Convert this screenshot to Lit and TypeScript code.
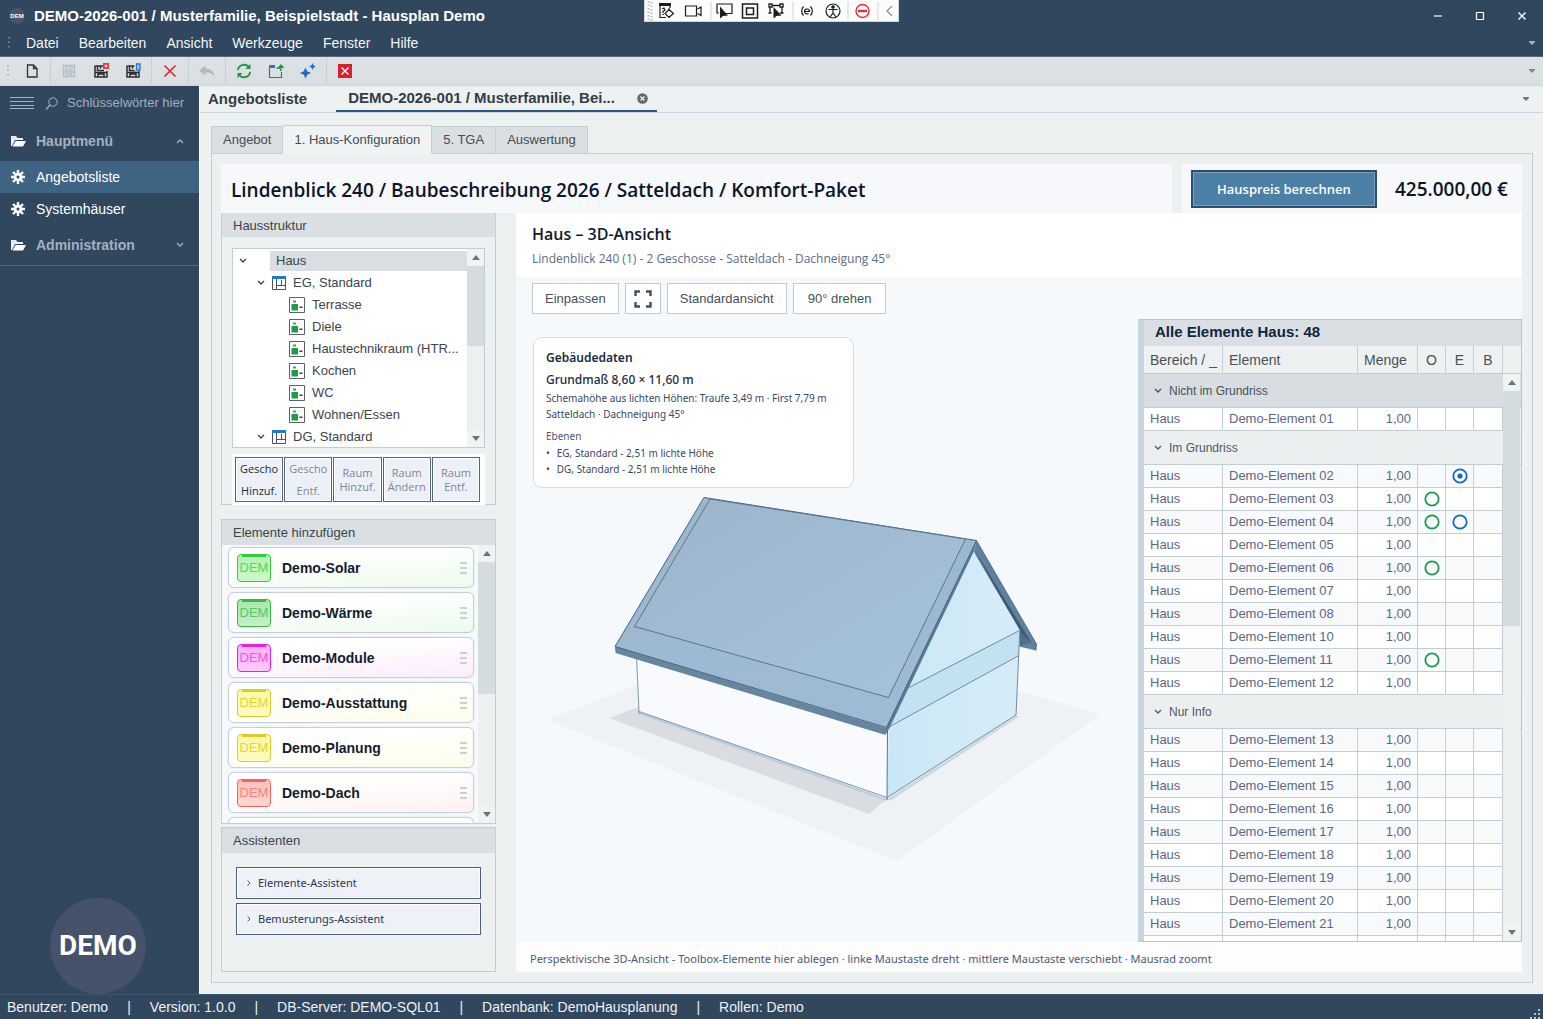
import { LitElement, html, svg, css, nothing } from "lit";
import { customElement, state } from "lit/decorators.js";
import { classMap } from "lit/directives/class-map.js";

type Mark = "ring" | "dot" | "";
interface Row { no: string; o?: Mark; e?: Mark; }
interface Group { title: string; rows: Row[]; }

const GROUPS: Group[] = [
  { title: "Nicht im Grundriss", rows: [{ no: "01" }] },
  {
    title: "Im Grundriss",
    rows: [
      { no: "02", e: "dot" }, { no: "03", o: "ring" }, { no: "04", o: "ring", e: "ring" },
      { no: "05" }, { no: "06", o: "ring" }, { no: "07" }, { no: "08" }, { no: "10" },
      { no: "11", o: "ring" }, { no: "12" },
    ],
  },
  {
    title: "Nur Info",
    rows: ["13", "14", "15", "16", "17", "18", "19", "20", "21", "22"].map((no) => ({ no })),
  },
];

const TOOLBOX = [
  { name: "Demo-Solar", tone: "lime" },
  { name: "Demo-Wärme", tone: "green" },
  { name: "Demo-Module", tone: "pink" },
  { name: "Demo-Ausstattung", tone: "yellow" },
  { name: "Demo-Planung", tone: "yellow" },
  { name: "Demo-Dach", tone: "red" },
];

const ROOMS = ["Terrasse", "Diele", "Haustechnikraum (HTR...", "Kochen", "WC", "Wohnen/Essen"];

const icon = (w: number, h: number, body: unknown) =>
  html`<svg class="icon" width=${w} height=${h} viewBox="0 0 ${w} ${h}" fill="none" aria-hidden="true">${body}</svg>`;

const chevronDown = icon(8, 6, svg`<path d="M1 1l3 3 3-3" stroke="currentColor" stroke-width="1.3"/>`);
const chevronUp = icon(8, 6, svg`<path d="M1 5l3-3 3 3" stroke="currentColor" stroke-width="1.3"/>`);
const caret = icon(6, 4, svg`<path d="M0 0h6v1L3 4 0 1z" fill="currentColor"/>`);
const gear = icon(14, 14, svg`<g stroke="#fff" stroke-width="2.4"><path d="M7 0v14M0 7h14M2 2l10 10M12 2L2 12"/></g>
  <circle cx="7" cy="7" r="4.4" fill="#fff"/><circle cx="7" cy="7" r="1.5" fill="#30475e"/>`);
const folder = icon(15, 12, svg`<path d="M0 11V1h5l1.500 2H12v2H4L1 11z" fill="#e8ecef"/><path d="M4.500 6H15l-3 5.500H1.500z" fill="#fff"/>`);

const saveShape = (c: string) => svg`<path d="M2 3h9.500M2 2.500V14h12V8M4.500 3v4.500H11M7.500 3v2.500M2 9.500h12M5 14v-3h6v3" stroke=${c} stroke-width="1.5"/>`;
const iconNew = icon(16, 16, svg`<path d="M3.500 2h6L13 5.500V14H3.500z M9.500 2v3.500H13" stroke="#2f3336" stroke-width="1.3"/>`);
const iconSave = icon(16, 16, svg`<path d="M2.500 2.500h11v11h-11z M5 2.500v4.500h6V2.500M8.500 3v2.500M2.500 9h11M5.500 13.500v-2.500h5v2.500" stroke="#b3bec9" stroke-width="1.4"/>`);
const iconSaveRed = icon(16, 16, svg`${saveShape("#2c2f31")}<path d="M10 0h6v6h-6z" fill="#e23b42"/><path d="M13 1.500v3M11.500 3h3" stroke="#fff"/>`);
const iconSaveBlue = icon(16, 16, svg`${saveShape("#2c2f31")}<path d="M9.500 0H16v8h-6.500z" fill="#dde2e5"/><path d="M11.500 1H15v6h-3.500z" fill="#a9cdf0" stroke="#2b76c8" stroke-width="1.3"/>`);
const iconDelete = icon(16, 16, svg`<path d="M2.500 2.500l11 11M13.500 2.500l-11 11" stroke="#df2b2f" stroke-width="1.7"/>`);
const iconUndo = icon(16, 16, svg`<path d="M0 7.500L6.500 2.500v3C12 5.500 15 8.500 15.500 13.500 13 10 10.500 9.500 6.500 9.500v3z" fill="#b0b9c2"/>`);
const iconRefresh = icon(16, 16, svg`<path d="M1.800 7A6.300 6.300 0 0 1 13.500 5M14.200 9A6.300 6.300 0 0 1 2.500 11" stroke="#23944a" stroke-width="1.8"/>
  <path d="M14.500 1v5h-5zM1.500 15v-5h5z" fill="#23944a"/>`);
const iconOpen = icon(16, 16, svg`<path d="M1.500 4v10.500h12V9" stroke="#5c6872" stroke-width="1.2"/><path d="M1 2h6v3H1z" fill="#2b76c8"/>
  <path d="M8.500 5h3c1.500 0 1.500 1 1.500 3" stroke="#23944a" stroke-width="1.6"/><path d="M9.500 5L13 1l3.500 4z" fill="#23944a"/>`);
const iconSparkle = icon(16, 16, svg`<path d="M5.500 4.500l1.700 3.800L11 10l-3.800 1.700L5.500 15.500l-1.700-3.800L0 10l3.800-1.700z" fill="#1e6bc6"/>
  <path d="M12.500 0l1.100 2.400L16 3.500l-2.400 1.100L12.500 7l-1.100-2.400L9 3.500l2.400-1.100z" fill="#1e6bc6"/>`);
const iconClose = icon(16, 16, svg`<path d="M1 1h14v14H1z" fill="#dc1f2d"/><path d="M4.500 4.500l7 7M11.500 4.500l-7 7" stroke="#fff" stroke-width="1.4"/>`);

const floorIcon = icon(14, 14, svg`<path d="M.5 1.500h13v12H.5zM4.500 3v10.500M4.500 9.500h9M9.500 4v5.500" stroke="#4b5459"/><path d="M0 0h14v3H0z" fill="#1f78d1"/>`);
const roomIcon = icon(16, 16, svg`<path d="M.5.5h15v15H.5z" stroke="#5a6266" fill="#fff"/><path d="M2.500 7h6.500v6.500h-6.500z" fill="#1f9a48"/>
  <path d="M4 3.500h3v2H4z" fill="#5f8a6d"/><path d="M10.500 9.500h3v1.500h-3z" fill="#3a4145"/>`);
const fitIcon = icon(18, 18, svg`<path d="M1.500 6V1.500H6M12 1.500h4.500V6M16.500 12v4.500H12M6 16.500H1.500V12" stroke="#3c5069" stroke-width="2.4"/>`);

@customElement("app-root")
export class AppRoot extends LitElement {
  @state() private tab = "1. Haus-Konfiguration";
  @state() private section = "Angebotsliste";

  static styles = css`
    :host {
      display: flex; flex-direction: column; height: 100vh; overflow: hidden;
      font: 13px/16px "Liberation Sans", Arial, sans-serif; color: #3b444c; background: #edf1f2;
      --navy: #30475e; --line: #c1ced3; --bar: #dbe0e3; --soft: #ecf0f1;
    }
    * { box-sizing: border-box; }
    button { font: inherit; color: inherit; background: none; border: 0; padding: 0; margin: 0; }
    h1, h2, h3, p, ul { margin: 0; padding: 0; font-weight: inherit; font-size: inherit; }
    ul { list-style: none; }
    a { color: inherit; text-decoration: none; }
    .icon { display: block; flex: none; }
    .spacer { flex: 1; }
    .humanist { font-family: "Open Sans", "Noto Sans", sans-serif; }

    .titlebar { position: relative; display: flex; align-items: center; height: 32px; padding: 0 11px 0 9px; gap: 9px; background: var(--navy); color: #fff; flex: none; }
    .app-badge { display: grid; place-items: center; width: 16px; height: 16px; border-radius: 8px; background: #46536a; font-size: 6px; font-weight: bold; }
    .caption { font-size: 15px; font-weight: bold; }
    .win { display: flex; gap: 22px; }
    .win button { width: 20px; height: 20px; display: grid; place-items: center; }
    .recorder { position: absolute; left: 644px; top: 0; display: flex; align-items: center; width: 255px; height: 22px; padding: 0; background: #fbfcfd; border: 1px solid #cfd5da; border-top: 0; }

    .menubar { display: flex; align-items: center; height: 25px; padding: 0 8px 2px; gap: 20px; background: var(--navy); color: #f3f6f8; font-size: 14px; border-bottom: 1px solid #54687b; flex: none; }
    .menubar .icon { color: #a6b2bd; }
    .grip { margin-right: -4px; }
    .toolbar { display: flex; align-items: center; height: 29px; padding: 0 8px 0 7px; background: linear-gradient(#dee2e5, #d8dee1); border-bottom: 1px solid #cbd3d7; flex: none; }
    .toolbar button { width: 32px; height: 24px; display: grid; place-items: center; }
    .toolbar .first { margin-left: 11px; }
    .toolbar .icon { color: #7d868d; }
    .sep { width: 1px; height: 26px; margin: 0 2px; background: #c6cfd4; }

    .body { display: flex; flex: 1; min-height: 0; }
    .sidebar { display: flex; flex-direction: column; width: 199px; flex: none; background: var(--navy); color: #fff; font-size: 14px; }
    .search { display: flex; align-items: center; height: 34px; padding-left: 10px; gap: 11px; }
    .search input { width: 130px; margin-left: -2px; border: 0; padding: 0; outline: 0; background: none; color: #b4bec8; font: 13px/16px "Liberation Sans", Arial, sans-serif; }
    .search input::placeholder { color: #a3afbb; opacity: 1; }
    .group { display: flex; align-items: center; width: 100%; height: 41px; padding: 0 15px 0 11px; gap: 10px; color: #a5b1bd; font-weight: bold; text-align: left; }
    .group.last { border-bottom: 1px solid #54677a; }
    .nav-item { display: flex; align-items: center; height: 32px; padding: 0 11px; gap: 11px; }
    .nav-item.on { background: #3f6383; }
    .logo { display: grid; place-items: center; width: 96px; height: 96px; margin: 0 0 0 50px; border-radius: 48px; background: #46526a; font: bold 28px/36px Roboto, "Liberation Sans", sans-serif; }

    .work { display: flex; flex-direction: column; flex: 1; min-width: 0; border-left: 1px solid #f8fafb; }
    .docs { display: flex; align-items: stretch; height: 27px; padding: 0 14px 0 0; border-bottom: 1px solid #c9d5da; background: #edf1f2; font-size: 15px; font-weight: bold; color: #333d46; flex: none; }
    .docs button { display: flex; align-items: center; padding: 0 8px; }
    .docs .doc { margin-left: 21px; padding: 0 9px 0 12px; gap: 22px; border-bottom: 2px solid #2f5678; }
    .docs .more { padding: 0; color: #6e777e; }
    .content { display: flex; flex-direction: column; flex: 1; min-height: 0; padding: 12px 10px 11px 11px; }
    .tabs { display: flex; align-items: flex-end; flex: none; height: 29px; position: relative; z-index: 1; margin-bottom: -1px; }
    .tabs button { height: 28px; padding: 0 11px; border: 1px solid var(--line); border-left-width: 0; background: #dadfe2; color: #444d54; }
    .tabs button:first-child { border-left-width: 1px; }
    .tabs button.on { height: 29px; background: #eff3f4; border-bottom-color: #eff3f4; }
    .page { display: flex; flex-direction: column; flex: 1; min-height: 0; padding: 10px 10px 10px 9px; border: 1px solid var(--line); background: var(--soft); }

    .headline { display: flex; gap: 10px; height: 49px; flex: none; }
    .headline h1 { flex: 1; min-width: 0; padding: 0 10px; background: #f6f8fb; color: #0d1528; font-size: 19px; font-weight: 600; line-height: 52px; white-space: nowrap; }
    .price { display: flex; align-items: center; gap: 18px; padding: 0 14px 0 9px; background: #f6f8fb; color: #0d1528; font-size: 19px; font-weight: 600; }
    .price button { width: 186px; height: 38px; border: 2px solid #29506f; outline: 1px solid #7ba0bd; outline-offset: -3px; background: #4d80a6; color: #fff; font-size: 13px; font-weight: 600; }

    .columns { display: flex; flex: 1; min-height: 0; gap: 20px; }
    .left { display: flex; flex-direction: column; width: 275px; flex: none; }
    .panel { display: flex; flex-direction: column; border: 1px solid var(--line); background: var(--soft); }
    .panel h2 { height: 25px; padding: 0 11px; line-height: 25px; background: #d9dfe2; flex: none; }
    .structure { border-top: 0; margin-bottom: 14px; }
    .structure h2 { height: 24px; }
    .tree { display: flex; height: 200px; margin: 11px 10px 6px; border: 1px solid var(--line); background: #fff; }
    .nodes { flex: 1; min-width: 0; overflow: hidden; padding-top: 1px; }
    .nodes li { display: flex; align-items: center; height: 22px; white-space: nowrap; padding-left: 56px; gap: 7px; }
    .nodes .root { padding-left: 6px; gap: 23px; }
    .nodes .root span { flex: 1; padding-left: 6px; line-height: 20px; background: #d8dee1; }
    .nodes .floor { padding-left: 24px; }
    .ops { display: flex; gap: 1px; margin: 0 10px -1px; padding: 3px 5px 3px 3px; background: #fbfcfd; height: 51px; }
    .ops button { flex: 1; border: 1px solid #52677f; outline: 1px solid #fff; outline-offset: -2px; background: #edf1f7; color: #7a889a; font-size: 11px; line-height: 14px; }
    .ops .tall { line-height: 22px; }
    .ops .ready { color: #1c2a42; }

    .scroll { display: flex; flex-direction: column; width: 17px; flex: none; background: var(--soft); color: #6c7378; }
    .scroll .end { display: grid; place-items: center; height: 17px; flex: none; background: #f0f3f4; }
    .track { flex: 1; }
    .thumb { background: #d5dce0; }

    .toolbox { flex: 1; min-height: 0; margin-bottom: 3px; }
    .shelf { display: flex; flex: 1; min-height: 0; background: #f6f8fb; }
    .cards { flex: 1; overflow: hidden; padding: 2px 4px 0 6px; }
    .card { display: flex; align-items: center; height: 41px; margin-bottom: 4px; padding: 0 6px 0 8px; gap: 11px; border: 1px solid #c3cfe0; border-radius: 6px; background: #fff; color: #131c30; font-size: 14px; font-weight: bold; box-shadow: 0 0 1px #c3cfe0; }
    .chip { position: relative; display: grid; place-items: center; width: 34px; height: 28px; border: 1px solid; border-radius: 4px; font-size: 13px; font-weight: normal; }
    .chip::before { content: ""; position: absolute; left: 4px; right: 4px; top: -1px; border-top: 3px solid; border-color: inherit; }
    .lime { background: linear-gradient(175deg, #fff 30%, #ecfbec); }
    .lime .chip { color: #55d755; background: linear-gradient(#b0f3b0, #cdf8cd); border-color: #35cc3b; }
    .green { background: linear-gradient(175deg, #fff 30%, #ecfaed); }
    .green .chip { color: #58c864; background: linear-gradient(#a6e6ab, #c6f0c8); border-color: #35b845; }
    .pink { background: linear-gradient(175deg, #fff 30%, #fcebfc); }
    .pink .chip { color: #ee55e6; background: linear-gradient(#ffadfa, #ffc9fc); border-color: #ea1fe0; }
    .yellow { background: linear-gradient(175deg, #fff 30%, #fefee9); }
    .yellow .chip { color: #e0d531; background: linear-gradient(#fbf8a4, #fdfbc4); border-color: #dccb2b; }
    .red { background: linear-gradient(175deg, #fff 30%, #fef1f0); }
    .red .chip { color: #f2837d; background: linear-gradient(#ffc0bb, #ffd7d4); border-color: #ec6660; }

    .helpers { height: 145px; flex: none; }
    .helpers div { display: flex; flex-direction: column; gap: 4px; padding: 14px 14px; }
    .helpers button { display: flex; align-items: center; gap: 7px; height: 32px; padding-left: 10px; border: 1px solid #4a607b; outline: 1px solid #fff; outline-offset: -2px; background: #eef2f8; color: #2a3850; font-family: "Noto Sans", sans-serif; font-size: 11px; }

    .viewer { display: flex; flex-direction: column; flex: 1; min-width: 0; }
    .viewer header { height: 64px; padding: 10px 16px; background: #fff; flex: none; }
    .viewer h2 { color: #111a2d; font-size: 16px; font-weight: 600; line-height: 22px; }
    .viewer header p { color: #5c6b85; font-size: 12px; line-height: 16px; margin-top: 6px; }
    .viewer footer { height: 30px; padding: 0 14px; line-height: 33px; background: #fdfdfe; color: #4a5a76; font-family: "Noto Sans", sans-serif; font-size: 11px; flex: none; white-space: nowrap; }
    .canvas { position: relative; display: flex; justify-content: space-between; flex: 1; min-height: 0; background: #f6f9fc; }
    .house { position: absolute; inset: 0; width: 100%; height: 100%; }
    .overlay { position: relative; padding: 6px 16px; }
    .tools { display: flex; gap: 6px; margin-bottom: 23px; }
    .tools button { height: 31px; padding: 0 12px; border: 1px solid #bdcbd2; background: #fff; font-size: 13px; color: #46505a; }
    .tools .square { padding: 0 8px; }
    .tools .wide { padding: 0 14px; }
    .facts { width: 321px; height: 151px; margin-left: 1px; padding: 9px 12px; border: 1px solid #d3deeb; border-radius: 9px; background: #fff; color: #38475f; font-family: "Noto Sans", sans-serif; font-size: 10px; line-height: 16px; white-space: nowrap; }
    .facts h3 { color: #1c2942; font-size: 12px; line-height: 22px; font-weight: 600; }
    .facts .size { color: #1c2942; font-size: 12px; line-height: 21px; font-weight: 500; }
    .facts .levels { margin-top: 7px; line-height: 14px; color: #4b5971; }
    .facts li { display: flex; gap: 7px; }
    .facts ul { padding-top: 2px; }

    .elements { position: relative; display: flex; flex-direction: column; width: 384px; margin-top: 42px; border: 1px solid #b5c5cf; border-left: 6px solid #c8d4e0; background: var(--soft); overflow: hidden; flex: none; }
    .elements h3 { height: 26px; padding-left: 11px; line-height: 24px; background: #d9dfe2; color: #11253d; font-size: 15px; font-weight: bold; flex: none; }
    .grid { position: relative; flex: 1; min-height: 0; overflow: hidden; }
    table { width: 100%; table-layout: fixed; border-collapse: separate; border-spacing: 0; color: #5c6883; }
    th { height: 28px; padding: 0 6px; border-right: 1px solid var(--line); border-bottom: 1px solid var(--line); background: #edf1f2; color: #48515a; font-size: 14px; font-weight: normal; text-align: left; white-space: nowrap; overflow: hidden; }
    th.mark, td.mark { padding: 0; text-align: center; }
    th:last-child { border-right: 0; }
    td { height: 23px; padding: 0 6px; border-right: 1px solid var(--line); border-bottom: 1px solid var(--line); background: #fff; white-space: nowrap; }
    .odd td { background: #f7f9fb; }
    .amount { text-align: right; }
    td:last-child { border-right: 0; background: var(--soft); border-bottom: 0; }
    .mark .icon { margin: 0 auto; }
    .grp td, .grp td:last-child { height: 34px; padding: 0 10px; background: #ebeff0; border-bottom: 1px solid var(--line); font-size: 12px; color: #4d5967; }
    .grp.sel td { background: #d7dde0; color: #48515a; }
    .grp button { display: flex; align-items: center; gap: 7px; }
    .grid .scroll { position: absolute; right: 1px; top: 28px; bottom: 0; }

    .status { display: flex; align-items: center; height: 25px; padding: 0 1px 0 7px; gap: 19px; background: var(--navy); color: #edf1f5; font-size: 14px; flex: none; border-top: 1px solid #3e546a; white-space: nowrap; }
    .status .icon { align-self: flex-end; }
  `;

  private scroll(share: number) {
    return html`<div class="scroll" aria-hidden="true">
      <span class="end">${icon(8, 5, svg`<path d="M0 5l4-5 4 5z" fill="currentColor"/>`)}</span>
      <div class="track"><div class="thumb" style="height:${share}%"></div></div>
      <span class="end">${icon(8, 5, svg`<path d="M0 0l4 5 4-5z" fill="currentColor"/>`)}</span>
    </div>`;
  }

  private titlebar() {
    return html`<div class="titlebar">
      <span class="app-badge">DEM</span><span class="caption">DEMO-2026-001 / Musterfamilie, Beispielstadt - Hausplan Demo</span>
      <span class="spacer"></span>
      <div class="recorder">
        <svg class="icon" width="254" height="21" viewBox="645 0 254 21" fill="none" stroke="#1d1d1f" stroke-width="1.2" aria-hidden="true">
          <path d="M648.500 1v19M651.500 2v19" stroke="#b4babf" stroke-width="2" stroke-dasharray="1.500 2"/>
          <path d="M659 4.500h12" stroke-width="3"/><path d="M660 5v12.500h6M662 9l2-1 1 2-2 1.500v1.500M662.500 14.500h1.500M670 5v3"/>
          <path d="M669 9.500l4.500 4-4.500 4-4-4zM669 8v3M669 16v2"/>
          <path d="M685.500 6h11v10h-11zM697.500 9l3.500-2v8.500l-3.500-2"/>
          <path d="M711 2v18M793 2v18M848 2v18M878 2v18" stroke="#d0d6da" stroke-width="1"/>
          <path d="M719 13h-2V4h15v9.500h-6"/><path d="M720 6.500v12l3-2.500 5-.500z" fill="#1d1d1f" stroke="none"/>
          <path d="M742.500 4h15v14h-15zM746.500 8h7v6.500h-7z" stroke-width="1.500"/>
          <path d="M769 4h3v3h-3zM780 4h3v3h-3zM772 5.500h8M770 7v6M768.500 13h3M782 7v6M780 13h3.500" stroke-width="1.300"/>
          <path d="M773.500 7v11.500l3-2.500 5-.500z" fill="#1d1d1f" stroke="none"/>
          <path d="M803.500 6.500a6.500 6.500 0 0 0 0 9M810.500 6.500a6.500 6.500 0 0 1 0 9"/><path d="M805 11.500h4.500a2.500 2.500 0 1 0-1 2"/>
          <circle cx="833" cy="11" r="7"/><circle cx="833" cy="7" r="1.200" fill="#1d1d1f"/>
          <path d="M828.500 9.500h9M833 9v4l-3 4M833 13l3 4"/>
          <circle cx="862.500" cy="11" r="6.500" stroke="#ee2b33" stroke-width="1.400"/><path d="M858 11h9" stroke="#ee2b33" stroke-width="2.400"/>
          <path d="M892 6l-5 5 5 5" stroke="#888e94"/>
        </svg>
      </div>
      <div class="win">
        <button aria-label="Minimieren">${icon(10, 10, svg`<path d="M1 5h8" stroke="#fff" stroke-width="1.2"/>`)}</button>
        <button aria-label="Maximieren">${icon(10, 10, svg`<path d="M1.500 1.500h7v7h-7z" stroke="#fff" stroke-width="1.2"/>`)}</button>
        <button aria-label="Schließen">${icon(10, 10, svg`<path d="M1.500 1.500l7 7M8.500 1.500l-7 7" stroke="#fff" stroke-width="1.400"/>`)}</button>
      </div>
    </div>`;
  }

  private toolbar() {
    const grip = (c: string) => html`<span class="grip">${icon(2, 12, svg`<path d="M1 0v12" stroke=${c} stroke-width="1.500" stroke-dasharray="1.500 3"/>`)}</span>`;
    const b = (label: string, i: unknown, cls = "") => html`<button class=${cls} aria-label=${label}>${i}</button>`;
    const sep = html`<span class="sep"></span>`;
    return html`<nav class="menubar">${grip("#8494a3")}
        ${["Datei", "Bearbeiten", "Ansicht", "Werkzeuge", "Fenster", "Hilfe"].map((m) => html`<button>${m}</button>`)}
        <span class="spacer"></span>${caret}</nav>
      <div class="toolbar">${grip("#9aa4ab")}
        ${b("Neu", iconNew, "first")}${sep}${b("Speichern", iconSave)}${b("Speichern und schließen", iconSaveRed)}${b("Speichern und neu", iconSaveBlue)}${sep}
        ${b("Löschen", iconDelete)}${sep}${b("Rückgängig", iconUndo)}${sep}${b("Aktualisieren", iconRefresh)}${b("Öffnen", iconOpen)}${b("Assistent", iconSparkle)}${sep}
        ${b("Beenden", iconClose)}<span class="spacer"></span>${caret}</div>`;
  }

  private sidebar() {
    return html`<nav class="sidebar">
      <div class="search">
        ${icon(24, 14, svg`<path d="M0 1.500h24M0 5.500h24M0 9.500h24M0 12.500h24" stroke="#a7b3be"/>`)}
        ${icon(13, 13, svg`<circle cx="8" cy="5" r="4.200" stroke="#a7b3be"/><path d="M5 8L1 12.500" stroke="#a7b3be" stroke-width="1.300"/>`)}
        <input aria-label="Schlüsselwörter" placeholder="Schlüsselwörter hier" />
      </div>
      <button class="group">${folder}Hauptmenü<span class="spacer"></span>${chevronUp}</button>
      ${["Angebotsliste", "Systemhäuser"].map((n) => html`<a href="#" class=${classMap({ "nav-item": true, on: this.section === n })}
        @click=${(ev: Event) => { ev.preventDefault(); this.section = n; }}>${gear}${n}</a>`)}
      <button class="group last">${folder}Administration<span class="spacer"></span>${chevronDown}</button>
      <span class="spacer"></span>
      <div class="logo">DEMO</div>
    </nav>`;
  }

  private left() {
    const op = (a: string, b: string, cls = "") => html`<button class=${cls}>${a}<br />${b}</button>`;
    return html`<div class="left">
      <section class="panel structure">
        <h2>Hausstruktur</h2>
        <div class="tree">
          <ul class="nodes">
            <li class="root">${chevronDown}<span>Haus</span></li>
            <li class="floor">${chevronDown}${floorIcon}EG, Standard</li>
            ${ROOMS.map((r) => html`<li>${roomIcon}${r}</li>`)}
            <li class="floor">${chevronDown}${floorIcon}DG, Standard</li>
          </ul>
          ${this.scroll(49)}
        </div>
        <div class="ops humanist">
          ${op("Gescho", "Hinzuf.", "tall ready")}${op("Gescho", "Entf.", "tall")}${op("Raum", "Hinzuf.")}${op("Raum", "Ändern")}${op("Raum", "Entf.")}
        </div>
      </section>
      <section class="panel toolbox">
        <h2>Elemente hinzufügen</h2>
        <div class="shelf">
          <div class="cards">
            ${TOOLBOX.map((t) => html`<div class="card ${t.tone}"><span class="chip">DEM</span>${t.name}<span class="spacer"></span>
              ${icon(7, 12, svg`<path d="M0 1h7M0 6h7M0 11h7" stroke="#8fa8bd"/>`)}</div>`)}
            <div class="card"></div>
          </div>
          ${this.scroll(54)}
        </div>
      </section>
      <section class="panel helpers">
        <h2>Assistenten</h2>
        <div>
          ${["Elemente-Assistent", "Bemusterungs-Assistent"].map((n) => html`<button>${icon(4, 6, svg`<path d="M.5.5L3 3 .5 5.500" stroke="#4a5a70"/>`)}${n}</button>`)}
        </div>
      </section>
    </div>`;
  }

  private house() {
    return html`<svg class="house" viewBox="516 277 1006 665" fill="none" role="img" aria-label="3D-Ansicht des Hauses">
      <defs>
        <linearGradient id="roof" x1="0" y1="0" x2="1" y2="1"><stop offset="0" stop-color="#9cb4ca"/><stop offset="1" stop-color="#a6c3dc"/></linearGradient>
        <linearGradient id="slope" x1="0" y1="0" x2="0" y2="1"><stop offset="0" stop-color="#9bb7cd"/><stop offset="1" stop-color="#9fbad3"/></linearGradient>
        <linearGradient id="gable" x1="0" y1="0" x2="1" y2="0"><stop offset="0" stop-color="#cae7f6"/><stop offset="1" stop-color="#d7ecf8"/></linearGradient>
      </defs>
      <path d="M547 720L634 686 1021 692 1101 714 897 861z" fill="#eff2f4"/>
      <path d="M609 718L639 707 887 799 869 814z" fill="#d9dce0"/>
      <path d="M887 799L1016 716 1020 716 890 801z" fill="#cfd8df"/>
      <path d="M636 656L639 711 887 798 888 728z" fill="#f8fafd"/>
      <path d="M639 713L887 800" stroke="#b9cddd" stroke-width="2"/>
      <path d="M636.500 656L639 711.500 887 797.500M639 711v3" stroke="#7d98b0"/>
      <path d="M976.500 540.500L1036.500 644 1036 650.500 1019 646.500 974 552z" fill="#5f819f"/>
      <path d="M974 549L1031 642 1021 642.500 1019 632z" fill="#405c74"/>
      <path d="M1020 632l12 11-12 3z" fill="#50708b"/>
      <path d="M973.500 551.500L1020 630.500 1016 715 887 797.500 889 727z" fill="url(#gable)"/>
      <path d="M907 688.500L1019.500 630.500 1019 655.500 889 727z" fill="#c2e1f1"/>
      <path d="M907 688.500L1019.500 630.500M889 727L1019 655.500" stroke="#6d8ca6"/>
      <path d="M1019.800 630.500L1016 715 887 797.500" stroke="#6d8ca6"/>
      <path d="M887.500 730L887 800" stroke="#54748f"/>
      <path d="M976.500 540.500L1036.500 644 1036 650.500" stroke="#45647f" stroke-width=".8"/>
      <path d="M615 646.500L886.500 728 885.500 735 615.500 653z" fill="#6585a1"/>
      <path d="M976.500 540.500L974 551 889.500 728 885.500 735 886 727z" fill="#587b9a"/>
      <path d="M704 497.500L976.500 540.500 886.500 727.500 615 646.500z" fill="url(#slope)" stroke="#45647f"/>
      <path d="M710 499L965.500 539 888.500 697.500 634.500 626.500z" fill="url(#roof)" stroke="#5a7690"/>
    </svg>`;
  }

  private mark(kind: Mark | undefined, color: string) {
    if (!kind) return nothing;
    return icon(16, 16, svg`<circle cx="8" cy="8" r="6.700" stroke=${color} stroke-width="1.800"/>
      ${kind === "dot" ? svg`<circle cx="8" cy="8" r="2.600" fill=${color}/>` : nothing}`);
  }

  private elementsPanel() {
    return html`<aside class="elements">
      <h3>Alle Elemente Haus: 48</h3>
      <div class="grid">
        <table>
          <colgroup><col style="width:79px" /><col /><col style="width:60px" /><col style="width:28px" /><col style="width:28px" /><col style="width:29px" /><col style="width:18px" /></colgroup>
          <thead><tr><th>Bereich / _</th><th>Element</th><th>Menge</th><th class="mark">O</th><th class="mark">E</th><th class="mark">B</th><th></th></tr></thead>
          <tbody>
            ${GROUPS.map((g, gi) => html`<tr class=${classMap({ grp: true, sel: gi === 0 })}><td colspan="7"><button>${chevronDown}${g.title}</button></td></tr>
              ${g.rows.map((r, i) => html`<tr class=${classMap({ odd: i % 2 === 0 && gi > 0 })}>
                <td>Haus</td><td>Demo-Element ${r.no}</td><td class="amount">1,00</td>
                <td class="mark">${this.mark(r.o, "#1f9a4a")}</td><td class="mark">${this.mark(r.e, "#1668c0")}</td><td class="mark"></td><td></td></tr>`)}`)}
          </tbody>
        </table>
        ${this.scroll(44)}
      </div>
    </aside>`;
  }

  render() {
    return html`${this.titlebar()}${this.toolbar()}
      <div class="body">
        ${this.sidebar()}
        <main class="work">
          <div class="docs">
            <button>Angebotsliste</button>
            <button class="doc">DEMO-2026-001 / Musterfamilie, Bei...
              ${icon(11, 11, svg`<circle cx="5.500" cy="5.500" r="5.300" fill="#63686c"/><path d="M3.500 3.500l4 4M7.500 3.500l-4 4" stroke="#edf1f2" stroke-width="1.400"/>`)}</button>
            <span class="spacer"></span><button class="more" aria-label="Weitere">${caret}</button>
          </div>
          <div class="content">
            <div class="tabs" role="tablist">
              ${["Angebot", "1. Haus-Konfiguration", "5. TGA", "Auswertung"].map((t) => html`<button role="tab" class=${classMap({ on: this.tab === t })} @click=${() => (this.tab = t)}>${t}</button>`)}
            </div>
            <div class="page">
              <div class="headline humanist">
                <h1>Lindenblick 240 / Baubeschreibung 2026 / Satteldach / Komfort-Paket</h1>
                <div class="price"><button>Hauspreis berechnen</button>425.000,00 €</div>
              </div>
              <div class="columns">
                ${this.left()}
                <section class="viewer">
                  <header class="humanist"><h2>Haus – 3D-Ansicht</h2><p>Lindenblick 240 (1) - 2 Geschosse - Satteldach - Dachneigung 45°</p></header>
                  <div class="canvas">
                    ${this.house()}
                    <div class="overlay">
                      <div class="tools"><button>Einpassen</button><button class="square" aria-label="Vollbild">${fitIcon}</button><button>Standardansicht</button><button class="wide">90° drehen</button></div>
                      <div class="facts">
                        <h3>Gebäudedaten</h3>
                        <p class="size">Grundmaß 8,60 × 11,60 m</p>
                        <p>Schemahöhe aus lichten Höhen: Traufe 3,49 m · First 7,79 m</p>
                        <p>Satteldach · Dachneigung 45°</p>
                        <p class="levels">Ebenen</p>
                        <ul><li><span>•</span>EG, Standard - 2,51 m lichte Höhe</li><li><span>•</span>DG, Standard - 2,51 m lichte Höhe</li></ul>
                      </div>
                    </div>
                    ${this.elementsPanel()}
                  </div>
                  <footer>Perspektivische 3D-Ansicht - Toolbox-Elemente hier ablegen · linke Maustaste dreht · mittlere Maustaste verschiebt · Mausrad zoomt</footer>
                </section>
              </div>
            </div>
          </div>
        </main>
      </div>
      <footer class="status"><span>Benutzer: Demo</span><span>|</span><span>Version: 1.0.0</span><span>|</span><span>DB-Server: DEMO-SQL01</span><span>|</span><span>Datenbank: DemoHausplanung</span><span>|</span><span>Rollen: Demo</span>
        <span class="spacer"></span>${icon(12, 12, svg`<path d="M8 2h2v2H8zM4 6h2v2H4zM8 6h2v2H8zM0 10h2v2H0zM4 10h2v2H4zM8 10h2v2H8z" fill="#b5c0ca"/>`)}</footer>`;
  }
}
